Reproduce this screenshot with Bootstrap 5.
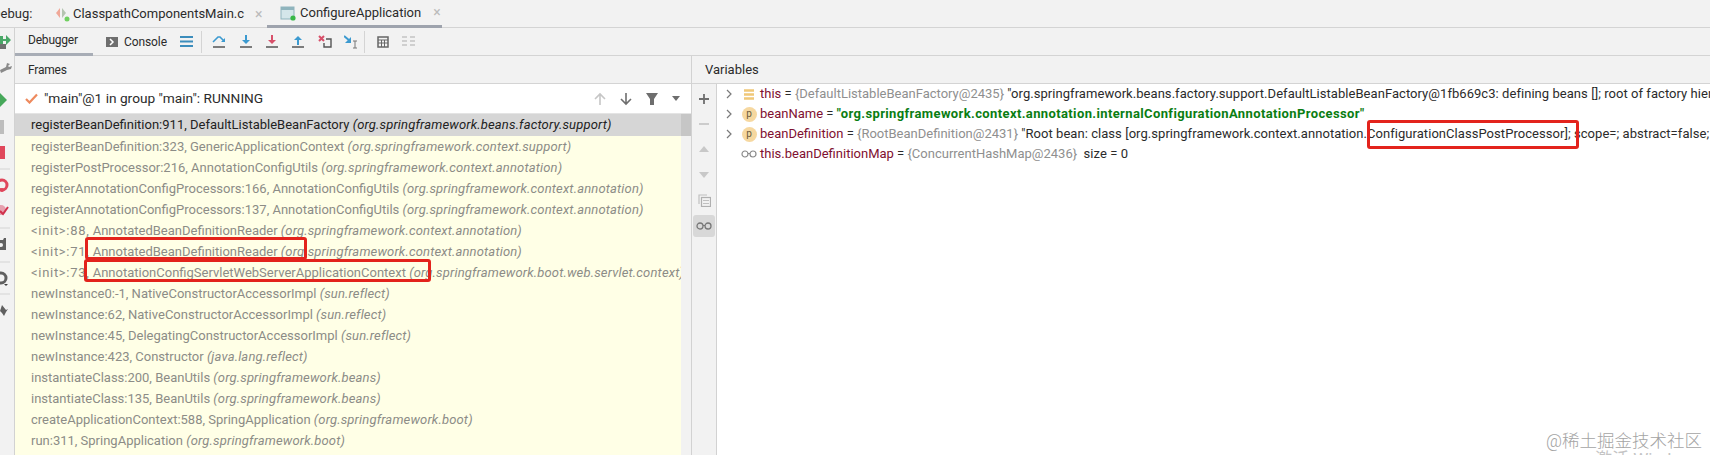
<!DOCTYPE html>
<html lang="en">
<head>
  <meta charset="UTF-8">
  <title>Debug | ConfigureApplication</title>
  <link href="https://cdn.jsdelivr.net/npm/bootstrap@5.3.3/dist/css/bootstrap.min.css" rel="stylesheet">
  <style>
    html, body { height: 455px; overflow: hidden; }
    body { background: #f2f2f2; font-family: Roboto, "Noto Sans CJK SC", sans-serif; font-size: 13px; color: #2b2b2b; }
    .ide { position: relative; width: 1710px; height: 455px; overflow: hidden; }
    .top-tabs { height: 28px; border-bottom: 1px solid #d4d4d4; padding-top: 1px; }
    .debug-lbl { width: 63px; margin-left: -8px; flex: none; }
    .run-tab { height: 27px; flex: none; }
    .run-tab svg { flex: none; }
    .run-tab .tab-x { color: #bbb; font-size: 14px; }
    .run-tab.one { width: 212px; gap: 3px; }
    .run-tab.two { width: 175px; padding-left: 13px; gap: 4px; border-bottom: 3px solid #9ea3ad; }
    .side-strip { width: 15px; flex: none; border-right: 1px solid #d2d2d2; height: 427px; }
    .tool-bar { height: 28px; border-bottom: 1px solid #d4d4d4; }
    .tool-tab { width: 78px; height: 28px; padding-left: 13px; border-bottom: 3px solid #a8adb6; font-size: 12px; letter-spacing: -.2px; }
    .console-tab { width: 87px; padding-left: 13px; gap: 6px; font-size: 12px; letter-spacing: -.1px; }
    .tool-ic { width: 26.4px; display: flex; justify-content: center; }
    .tool-sep { width: 1px; height: 22px; background: #d4d4d4; margin: 0 8px; }
    .frames-pane { width: 677px; flex: none; border-right: 1px solid #d2d2d2; }
    .pane-head { height: 28px; border-bottom: 1px solid #d4d4d4; padding-left: 13px; padding-top: 1px; }
    .frames-pane .pane-head { font-size: 12px; letter-spacing: -.2px; }
    .thread-row { height: 30px; background: #fff; padding-left: 10px; border-bottom: 1px solid #e4e4e4; gap: 6px; font-size: 13.7px; }
    .thread-tools { gap: 12px; padding-right: 10px; }
    .frame-wrap { height: 342px; overflow: hidden; }
    .frame-list { flex: 1; background: #ffffe6; overflow: hidden; }
    .frame-item { height: 21px; line-height: 21px; padding-left: 16px; color: #8c8c86; white-space: nowrap; }
    .frame-item.is-on { height: 22px; background: #d6d6d6; color: #222; }
    .frame-item i { letter-spacing: .16px; }
    .init-tag { letter-spacing: .7px; }
    .frame-scroll { width: 10px; background: #f2f2f2; }
    .frame-scroll div { height: 22px; background: #c6c6c6; }
    .var-strip { width: 25px; flex: none; border-right: 1px solid #d2d2d2; padding-top: 2px; }
    .var-btn { height: 25.4px; }
    .var-btn.is-on { background: #d8d8d8; border-radius: 3px; margin: 2px 1px 0; height: 22px; }
    .var-list { flex: 1; background: #fff; overflow: hidden; padding-top: 0; }
    .var-row { height: 20px; line-height: 20px; white-space: nowrap; }
    .var-arrow { width: 17px; margin-left: 4px; flex: none; display: flex; justify-content: center; }
    .var-ic { width: 22px; flex: none; display: flex; justify-content: center; margin-right: 0; }
    .p-ic { width: 15px; height: 15px; border-radius: 50%; background: #f6d8a0; color: #6b5a3a; font-size: 10px; line-height: 14px; text-align: center; }
    .var-name { color: #7f1030; }
    .var-type { color: #8f8f8f; }
    .var-str { color: #0a7d12; font-weight: 700; letter-spacing: .38px; }
    .var-val { color: #2b2b2b; letter-spacing: .05px; }
    .red-box { position: absolute; border: 3px solid #e3231c; border-radius: 3px; pointer-events: none; }
    .box-a { left: 85px; top: 237px; width: 222px; height: 23px; }
    .box-b { left: 84px; top: 259px; width: 347px; height: 23px; }
    .box-c { left: 1367px; top: 120px; width: 212px; height: 29px; }
    .wm-a { position: absolute; left: 1546px; top: 428px; font-size: 17.5px; color: #a4a4a4; font-weight: 300; }
    .wm-b { position: absolute; left: 1595px; top: 447px; font-size: 17px; color: #c4c4c4; }
  </style>
</head>
<body>
  <div class="ide d-flex flex-column">

    <!-- Run tabs -->
    <div class="top-tabs d-flex align-items-center">
      <div class="debug-lbl">Debug:</div>
      <div class="run-tab one d-flex align-items-center">
        <svg width="15" height="16" viewBox="0 0 15 16"><path d="M5 2L1 7l4 5z" fill="#f0a898"/><path d="M7 2l4 5-4 5z" fill="#b4c4b0"/><circle cx="12" cy="13" r="2.500" fill="#70d060"/></svg>
        <span class="text-nowrap">ClasspathComponentsMain.c</span><span class="tab-x ms-2">&times;</span>
      </div>
      <div class="run-tab two d-flex align-items-center">
        <svg width="16" height="16" viewBox="0 0 16 16"><rect x="1" y="2" width="13" height="12" fill="#d4e6ea" stroke="#8fb4bd"/><rect x="1" y="2" width="13" height="3" fill="#8fb4bd"/><circle cx="13" cy="13" r="2.6" fill="#38b848"/></svg>
        <span class="text-nowrap">ConfigureApplication</span><span class="tab-x ms-2">&times;</span>
      </div>
    </div>

    <div class="d-flex flex-grow-1">
      <!-- Left action strip -->
      <div class="side-strip">
        <svg width="14" height="427" viewBox="0 28 14 427">
          <path d="M0 36h3v3h3v-4l5 5-5 5v-4H3v3H0z" fill="#4aa868"/><rect x="0" y="44" width="6" height="5" fill="#707070"/>
          <path d="M0 70l6-3 1-4 3 1-2 2 1 1 3-1-1 3-4 1-6 3z" fill="#8a8a8a"/>
          <path d="M0 93l7 7-7 7z" fill="#46a85a"/>
          <rect x="0" y="120" width="4" height="14" fill="#bdbdbd"/>
          <rect x="0" y="146" width="5" height="13" fill="#e0475c"/>
          <path d="M0 169h10" stroke="#d4d4d4"/>
          <circle cx="2" cy="185" r="5" fill="none" stroke="#e0475c" stroke-width="3"/><circle cx="2" cy="190" r="2" fill="#e0475c"/>
          <circle cx="1" cy="210" r="5" fill="#e6a0ae"/><path d="M0 211l3 3 5-7" fill="none" stroke="#d0304c" stroke-width="2"/>
          <path d="M0 228h10" stroke="#d4d4d4"/>
          <path d="M0 240h3l1-2h2v12H0z" fill="#606060"/><circle cx="1" cy="245" r="2" fill="#f2f2f2"/>
          <path d="M0 262h10" stroke="#d4d4d4"/>
          <circle cx="1" cy="278" r="5" fill="none" stroke="#606060" stroke-width="3"/><path d="M4 284l2 2 2-2z" fill="#404040"/>
          <path d="M0 294h10" stroke="#d4d4d4"/>
          <path d="M2 305l4 5 2-1-2 3-2 4-2-3-2-2z" fill="#606060"/>
        </svg>
      </div>

      <div class="flex-grow-1 d-flex flex-column">
        <!-- Debugger toolbar -->
        <div class="tool-bar d-flex align-items-center">
          <div class="tool-tab d-flex align-items-center">Debugger</div>
          <div class="console-tab d-flex align-items-center">
            <svg width="12" height="10" viewBox="0 0 12 10"><rect width="12" height="10" fill="#6e6e6e"/><path d="M4 2l3 3-3 3" fill="none" stroke="#fff" stroke-width="1.500"/></svg>
            <span>Console</span>
          </div>
          <svg width="13" height="11" viewBox="0 0 13 11"><path d="M0 1h13M0 5.500h13M0 10h13" stroke="#3c8dbc" stroke-width="2"/></svg>
          <div class="tool-sep ms-2 me-1"></div>
          <div class="tool-ic"><svg width="14" height="13" viewBox="0 0 14 13"><path d="M1 7l5-5h2l4 4" fill="none" stroke="#3c9ad0" stroke-width="1.600"/><path d="M9 7h4V3z" fill="#3c9ad0"/><path d="M1 12h12" stroke="#555" stroke-width="1.500"/></svg></div>
          <div class="tool-ic"><svg width="14" height="13" viewBox="0 0 14 13"><path d="M7 0v6" stroke="#3c9ad0" stroke-width="2"/><path d="M3 5h8l-4 4z" fill="#3c9ad0"/><path d="M1 12h12" stroke="#555" stroke-width="1.500"/></svg></div>
          <div class="tool-ic"><svg width="14" height="13" viewBox="0 0 14 13"><path d="M7 0v6" stroke="#d8506a" stroke-width="2"/><path d="M3 5h8l-4 4z" fill="#d8506a"/><path d="M1 12h12" stroke="#555" stroke-width="1.500"/></svg></div>
          <div class="tool-ic"><svg width="14" height="13" viewBox="0 0 14 13"><path d="M7 4v6" stroke="#3c9ad0" stroke-width="2"/><path d="M3 5h8L7 1z" fill="#3c9ad0"/><path d="M1 12h12" stroke="#555" stroke-width="1.500"/></svg></div>
          <div class="tool-ic"><svg width="14" height="13" viewBox="0 0 14 13"><path d="M1 1l5 5M6 1L1 6" stroke="#d8506a" stroke-width="2"/><path d="M8 4h5v8H6V8" fill="none" stroke="#555" stroke-width="1.400"/></svg></div>
          <div class="tool-ic"><svg width="14" height="14" viewBox="0 0 14 14"><path d="M0 1l6 5" stroke="#3c9ad0" stroke-width="2"/><path d="M7 2v6H1z" fill="#3c9ad0"/><path d="M9 6h4M11 6v7M9 13h4" stroke="#777"/></svg></div>
          <div class="tool-sep ms-0 me-1"></div>
          <div class="tool-ic"><svg width="12" height="12" viewBox="0 0 12 12"><rect x="1" y="1" width="10" height="10" fill="none" stroke="#666" stroke-width="1.500"/><path d="M1 4h10M1 7h10M4.500 4v7M7.500 4v7" stroke="#666"/></svg></div>
          <div class="tool-ic"><svg width="13" height="11" viewBox="0 0 13 11"><path d="M0 1h5M8 1h5M0 5h5M8 5h5M0 9h5M8 9h5" stroke="#c4c4c4" stroke-width="1.500"/></svg></div>
        </div>

        <div class="d-flex flex-grow-1">
          <!-- Frames -->
          <div class="frames-pane d-flex flex-column">
            <div class="pane-head d-flex align-items-center">Frames</div>
            <div class="thread-row d-flex align-items-center">
              <svg width="13" height="11" viewBox="0 0 13 11"><path d="M1 6l3.500 3.500L12 1.500" fill="none" stroke="#ee8a5e" stroke-width="2.200"/></svg>
              <span class="flex-grow-1">"main"@1 in group "main": RUNNING</span>
              <div class="thread-tools d-flex align-items-center">
                <svg width="14" height="14" viewBox="0 0 14 14"><path d="M7 13V2M2 7l5-5 5 5" fill="none" stroke="#c6c6c6" stroke-width="1.600"/></svg>
                <svg width="14" height="14" viewBox="0 0 14 14"><path d="M7 1v11M2 7l5 5 5-5" fill="none" stroke="#6e6e6e" stroke-width="1.600"/></svg>
                <svg width="14" height="14" viewBox="0 0 14 14"><path d="M1 1h12L9 7v6H5V7z" fill="#6e6e6e"/></svg>
                <svg width="10" height="6" viewBox="0 0 10 6"><path d="M1 0h8L5 5z" fill="#6e6e6e"/></svg>
              </div>
            </div>
            <div class="frame-wrap d-flex">
              <div class="frame-list">
                <div class="frame-item is-on">registerBeanDefinition:911, DefaultListableBeanFactory <i>(org.springframework.beans.factory.support)</i></div>
                <div class="frame-item">registerBeanDefinition:323, GenericApplicationContext <i>(org.springframework.context.support)</i></div>
                <div class="frame-item">registerPostProcessor:216, AnnotationConfigUtils <i>(org.springframework.context.annotation)</i></div>
                <div class="frame-item">registerAnnotationConfigProcessors:166, AnnotationConfigUtils <i>(org.springframework.context.annotation)</i></div>
                <div class="frame-item">registerAnnotationConfigProcessors:137, AnnotationConfigUtils <i>(org.springframework.context.annotation)</i></div>
                <div class="frame-item"><span class="init-tag">&lt;init&gt;:88,</span> AnnotatedBeanDefinitionReader <i>(org.springframework.context.annotation)</i></div>
                <div class="frame-item"><span class="init-tag">&lt;init&gt;:71,</span> AnnotatedBeanDefinitionReader <i>(org.springframework.context.annotation)</i></div>
                <div class="frame-item"><span class="init-tag">&lt;init&gt;:73,</span> AnnotationConfigServletWebServerApplicationContext <i>(org.springframework.boot.web.servlet.context)</i></div>
                <div class="frame-item">newInstance0:-1, NativeConstructorAccessorImpl <i>(sun.reflect)</i></div>
                <div class="frame-item">newInstance:62, NativeConstructorAccessorImpl <i>(sun.reflect)</i></div>
                <div class="frame-item">newInstance:45, DelegatingConstructorAccessorImpl <i>(sun.reflect)</i></div>
                <div class="frame-item">newInstance:423, Constructor <i>(java.lang.reflect)</i></div>
                <div class="frame-item">instantiateClass:200, BeanUtils <i>(org.springframework.beans)</i></div>
                <div class="frame-item">instantiateClass:135, BeanUtils <i>(org.springframework.beans)</i></div>
                <div class="frame-item">createApplicationContext:588, SpringApplication <i>(org.springframework.boot)</i></div>
                <div class="frame-item">run:311, SpringApplication <i>(org.springframework.boot)</i></div>
              </div>
              <div class="frame-scroll"><div></div></div>
            </div>
          </div>

          <!-- Variables -->
          <div class="flex-grow-1 d-flex flex-column">
            <div class="pane-head d-flex align-items-center">Variables</div>
            <div class="d-flex flex-grow-1">
              <div class="var-strip d-flex flex-column">
                <div class="var-btn d-flex align-items-center justify-content-center"><svg width="12" height="12" viewBox="0 0 12 12"><path d="M6 1v10M1 6h10" stroke="#6e6e6e" stroke-width="1.800"/></svg></div>
                <div class="var-btn d-flex align-items-center justify-content-center"><svg width="12" height="12" viewBox="0 0 12 12"><path d="M1 6h10" stroke="#c8c8c8" stroke-width="1.800"/></svg></div>
                <div class="var-btn d-flex align-items-center justify-content-center"><svg width="12" height="8" viewBox="0 0 12 8"><path d="M1 7h10L6 1z" fill="#c8c8c8"/></svg></div>
                <div class="var-btn d-flex align-items-center justify-content-center"><svg width="12" height="8" viewBox="0 0 12 8"><path d="M1 1h10L6 7z" fill="#c8c8c8"/></svg></div>
                <div class="var-btn d-flex align-items-center justify-content-center"><svg width="13" height="13" viewBox="0 0 13 13"><path d="M1 10V1h8" fill="none" stroke="#c0c0c0" stroke-width="1.200"/><rect x="3.500" y="3.500" width="9" height="9" fill="none" stroke="#b0b0b0" stroke-width="1.200"/><path d="M5 6.500h6M5 9.500h6" stroke="#c0c0c0"/></svg></div>
                <div class="var-btn is-on d-flex align-items-center justify-content-center"><svg width="16" height="8" viewBox="0 0 16 8"><circle cx="4" cy="4" r="3" fill="none" stroke="#777" stroke-width="1.300"/><circle cx="12" cy="4" r="3" fill="none" stroke="#777" stroke-width="1.300"/><path d="M7 3.500h2" stroke="#777"/></svg></div>
              </div>
              <div class="var-list">
                <div class="var-row d-flex align-items-center">
                  <div class="var-arrow"><svg width="7" height="10" viewBox="0 0 7 10"><path d="M1 1l4 4-4 4" fill="none" stroke="#7a7a7a" stroke-width="1.200"/></svg></div>
                  <div class="var-ic"><svg width="12" height="11" viewBox="0 0 12 11"><path d="M1 1.500h10M1 5.500h10M1 9.500h10" stroke="#f0c878" stroke-width="2.400"/></svg></div>
                  <span class="var-name">this</span>&nbsp;=&nbsp;<span class="var-type">{DefaultListableBeanFactory@2435}</span>&nbsp;<span class="var-val">"org.springframework.beans.factory.support.DefaultListableBeanFactory@1fb669c3: defining beans []; root of factory hierarchy"</span>
                </div>
                <div class="var-row d-flex align-items-center">
                  <div class="var-arrow"><svg width="7" height="10" viewBox="0 0 7 10"><path d="M1 1l4 4-4 4" fill="none" stroke="#7a7a7a" stroke-width="1.200"/></svg></div>
                  <div class="var-ic"><div class="p-ic">p</div></div>
                  <span class="var-name">beanName</span>&nbsp;=&nbsp;<span class="var-str">"org.springframework.context.annotation.internalConfigurationAnnotationProcessor"</span>
                </div>
                <div class="var-row d-flex align-items-center">
                  <div class="var-arrow"><svg width="7" height="10" viewBox="0 0 7 10"><path d="M1 1l4 4-4 4" fill="none" stroke="#7a7a7a" stroke-width="1.200"/></svg></div>
                  <div class="var-ic"><div class="p-ic">p</div></div>
                  <span class="var-name">beanDefinition</span>&nbsp;=&nbsp;<span class="var-type">{RootBeanDefinition@2431}</span>&nbsp;<span class="var-val">"Root bean: class [org.springframework.context.annotation.ConfigurationClassPostProcessor]; scope=; abstract=false; lazyInit=null"</span>
                </div>
                <div class="var-row d-flex align-items-center">
                  <div class="var-arrow"></div>
                  <div class="var-ic"><svg width="16" height="8" viewBox="0 0 16 8"><circle cx="4" cy="4" r="3" fill="none" stroke="#8a8a8a" stroke-width="1.200"/><circle cx="12" cy="4" r="3" fill="none" stroke="#8a8a8a" stroke-width="1.200"/><path d="M7 3.500h2" stroke="#8a8a8a"/></svg></div>
                  <span class="var-name">this.beanDefinitionMap</span>&nbsp;=&nbsp;<span class="var-type">{ConcurrentHashMap@2436}</span>&nbsp;&nbsp;<span class="var-val">size = 0</span>
                </div>
              </div>
            </div>
          </div>
        </div>
      </div>
    </div>

    <!-- Annotations over the screenshot -->
    <div class="red-box box-a"></div>
    <div class="red-box box-b"></div>
    <div class="red-box box-c"></div>
    <div class="wm-a text-nowrap">@稀土掘金技术社区</div>
    <div class="wm-b text-nowrap">激活 Windows</div>
  </div>

  <script src="https://cdn.jsdelivr.net/npm/bootstrap@5.3.3/dist/js/bootstrap.bundle.min.js"></script>
</body>
</html>
